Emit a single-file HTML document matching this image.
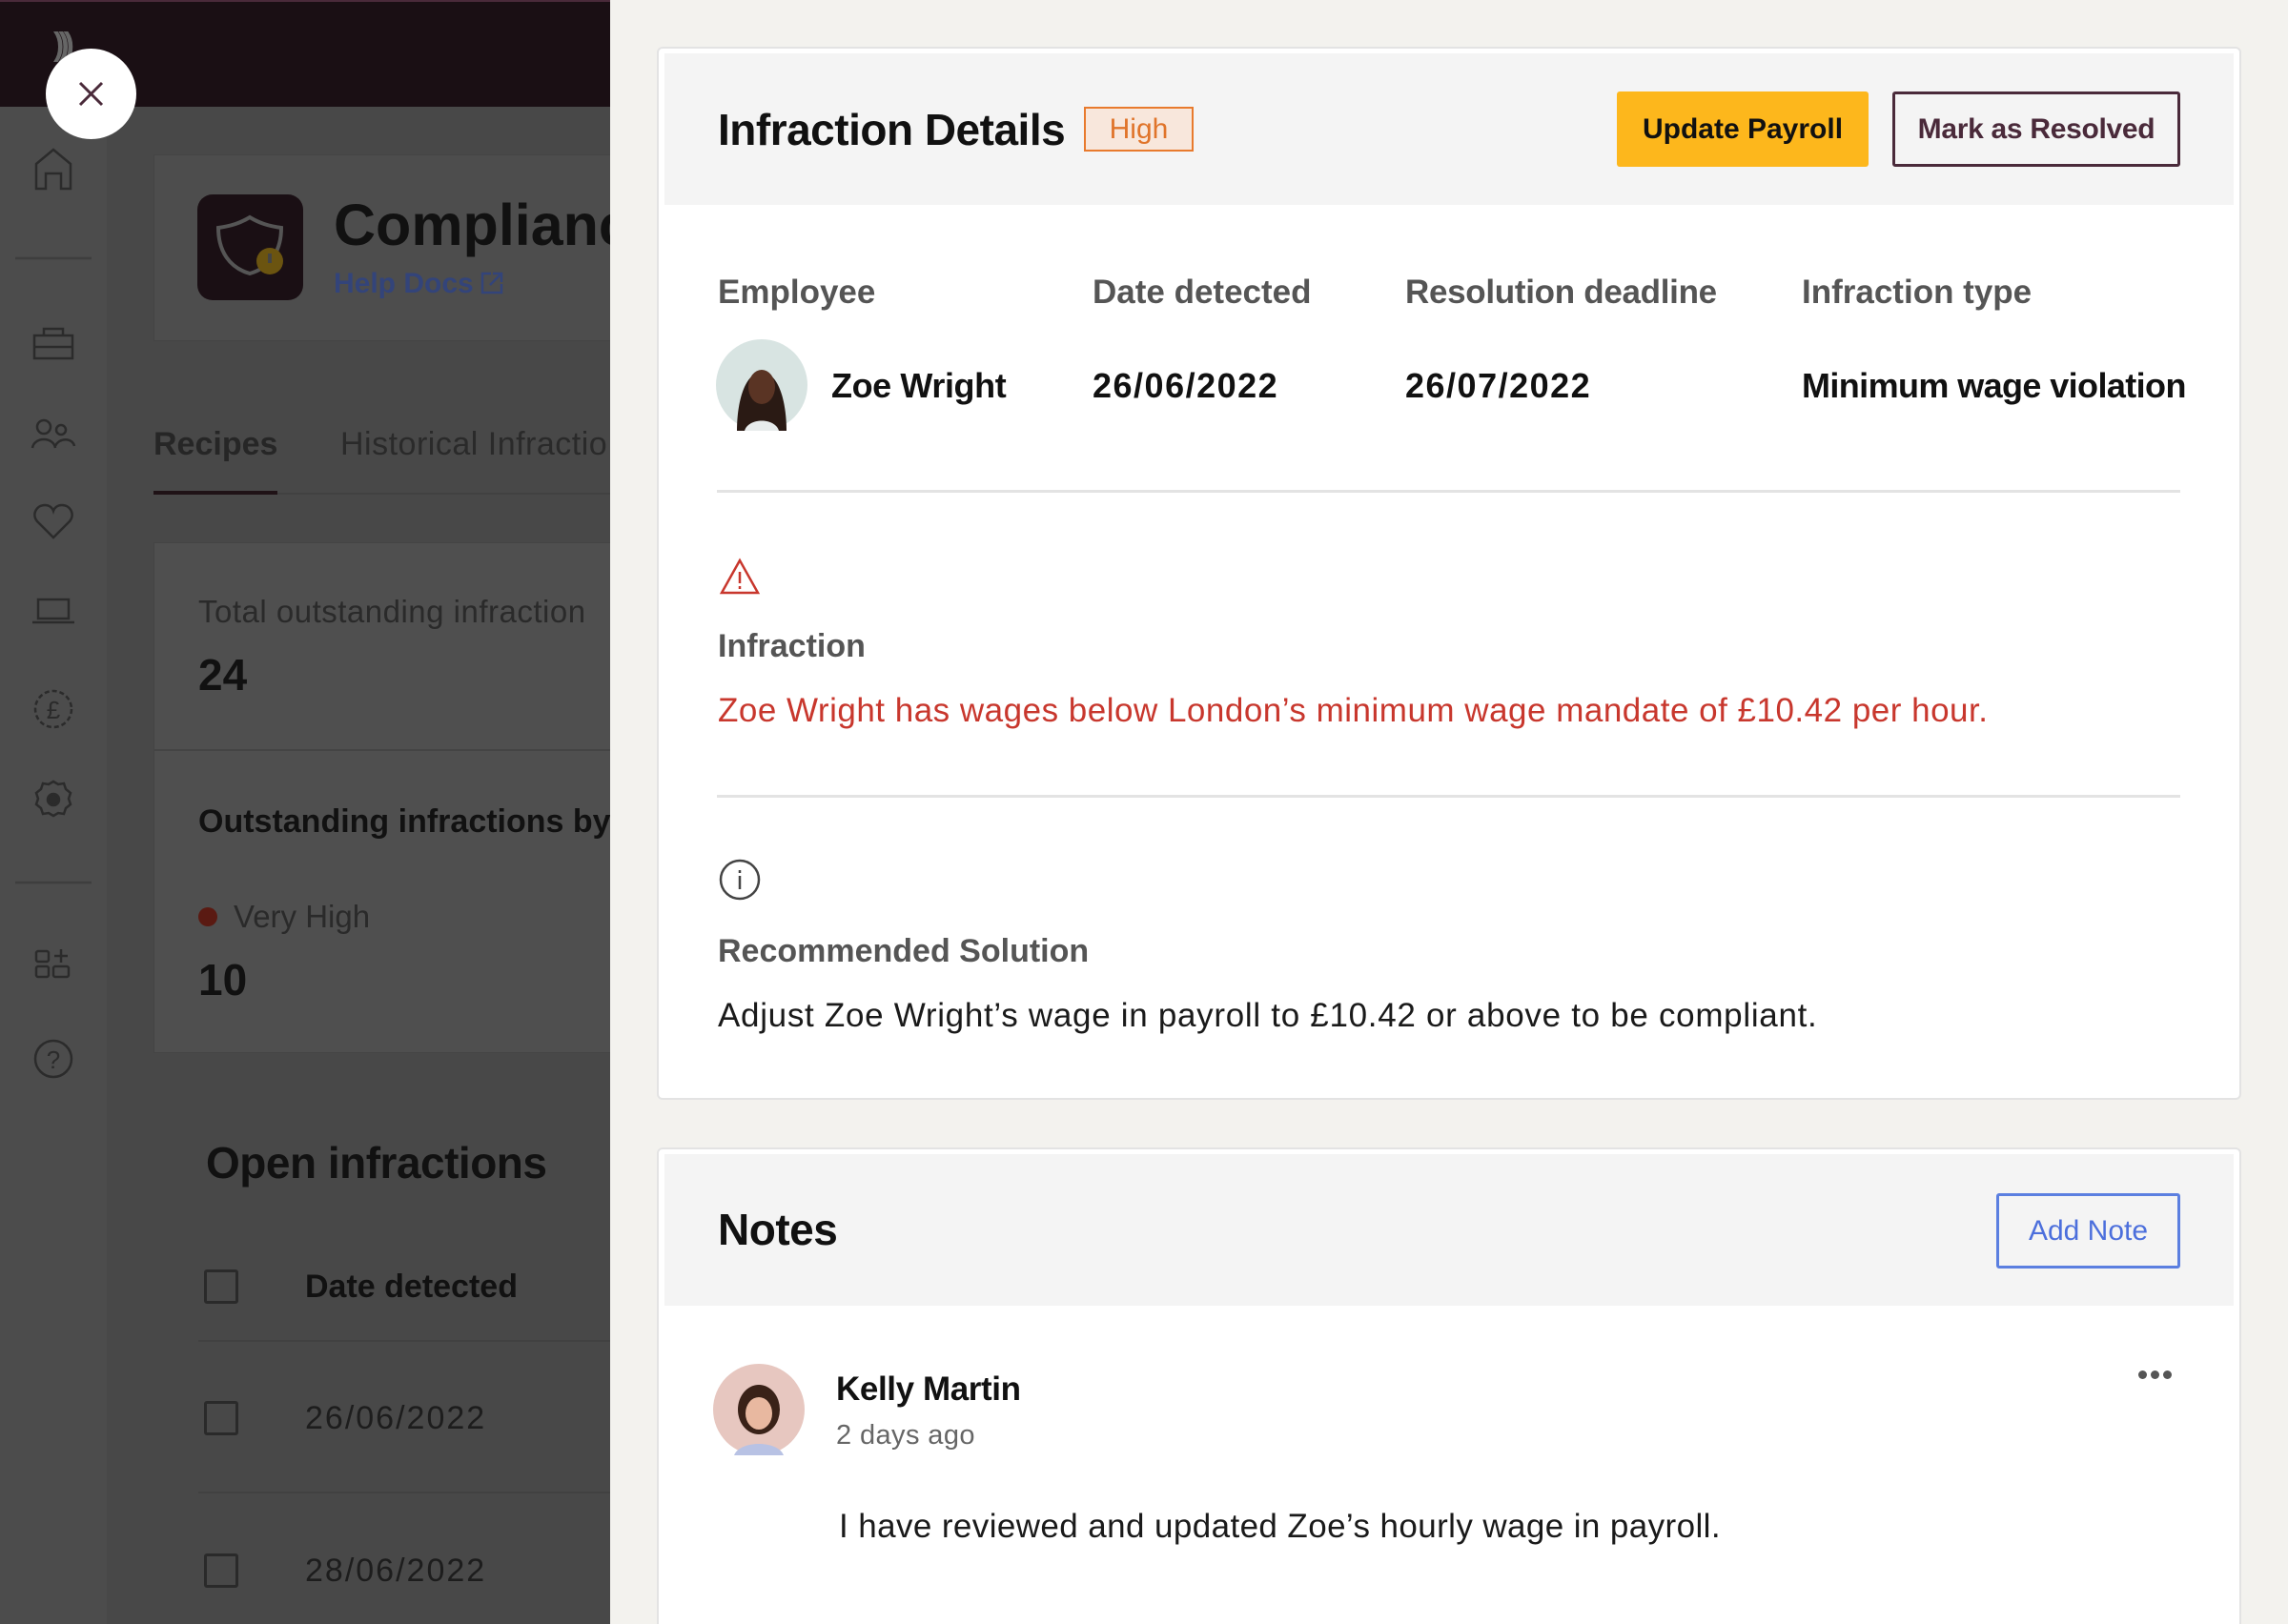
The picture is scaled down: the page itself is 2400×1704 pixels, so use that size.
<!DOCTYPE html>
<html style="overflow:hidden"><head><meta charset="utf-8"><style>
*{margin:0;padding:0;box-sizing:border-box}
html,body{width:2400px;height:1704px;overflow:hidden}
body{position:relative;background:#f3f2ee;font-family:"Liberation Sans",sans-serif}
.a{position:absolute;white-space:nowrap}
.t{line-height:1}
</style></head><body>
<div class="a" style="left:0;top:0;width:640px;height:1704px;overflow:hidden;background:#484848">
<div class="a" style="left:0;top:0;width:640px;height:112px;background:#1a0f14"></div>
<div class="a" style="left:0;top:0;width:640px;height:2px;background:#4a2a3a"></div>
<div class="a" style="left:0;top:112px;width:112px;height:1592px;background:#4c4c4c"></div>
<div class="a t" style="left:56px;top:30px;color:#666;font-size:34px;font-weight:bold;letter-spacing:-6px">)))</div>
<svg class="a" style="left:0;top:112px" width="112" height="1592" fill="none" stroke="#2b2b2b" stroke-width="2.5">
<path d="M38 86V60l18-15 18 15v26h-10V70H48v16z"/>
<line x1="16" y1="159" x2="96" y2="159" stroke="#3e3e3e"/>
<rect x="36" y="240" width="40" height="24"/><path d="M46 240v-7h20v7M36 252h40"/>
<circle cx="46" cy="336" r="7"/><circle cx="64" cy="339" r="5"/><path d="M34 358c2-12 22-12 24 0M58 356c4-9 18-9 20 0"/>
<path d="M56 452l-17-17c-6-7-1-17 8-17 5 0 8 3 9 6 1-3 4-6 9-6 9 0 14 10 8 17z"/>
<rect x="40" y="517" width="32" height="20"/><path d="M34 541h44"/>
<circle cx="56" cy="632" r="19" stroke-dasharray="5 3"/><text x="56" y="642" font-size="26" fill="#2b2b2b" stroke="none" text-anchor="middle" font-family="Liberation Sans">£</text>
<circle cx="56" cy="727" r="6" fill="#2b2b2b"/><path d="M56 708l5 3 6-1 2 6 5 4-2 6 2 6-5 4-2 6-6-1-5 3-5-3-6 1-2-6-5-4 2-6-2-6 5-4 2-6 6 1z"/>
<line x1="16" y1="814" x2="96" y2="814" stroke="#3e3e3e"/>
<rect x="38" y="886" width="13" height="11" rx="2"/><rect x="38" y="902" width="13" height="11" rx="2"/><rect x="56" y="902" width="16" height="11" rx="2"/><path d="M64 884v14M57 891h14"/>
<circle cx="56" cy="999" r="19"/><text x="56" y="1009" font-size="26" fill="#2b2b2b" stroke="none" text-anchor="middle" font-family="Liberation Sans">?</text>
</svg>
<div class="a" style="left:161px;top:162px;width:500px;height:196px;background:#4d4d4d;border:1px solid #444"></div>
<div class="a" style="left:207px;top:204px;width:111px;height:111px;background:#1a0f14;border-radius:16px"></div>
<svg class="a" style="left:207px;top:204px" width="111" height="111"><path d="M22 35c14-2 23-5 33-11 10 6 19 9 33 11 0 25-12 42-33 48-21-6-33-23-33-48z" fill="none" stroke="#555" stroke-width="4"/><circle cx="76" cy="70" r="14" fill="#6b5410"/><rect x="74" y="62" width="4" height="10" fill="#444"/></svg>
<div class="a t" style="left:350px;top:206px;font-size:61px;font-weight:bold;color:#111">Complianc</div>
<div class="a t" style="left:350px;top:283px;font-size:30px;font-weight:bold;color:#33447a">Help Docs</div>
<svg class="a" style="left:503px;top:284px" width="26" height="26" fill="none" stroke="#33447a" stroke-width="2.5"><path d="M12 3H3v20h20v-9M14 3h9v9M23 3L11 15"/></svg>
<div class="a t" style="left:161px;top:449px;font-size:34px;font-weight:bold;color:#262626">Recipes</div>
<div class="a t" style="left:357px;top:449px;font-size:34px;color:#2a2a2a;letter-spacing:0.5px">Historical Infractio</div>
<div class="a" style="left:161px;top:517px;width:479px;height:2px;background:#414141"></div>
<div class="a" style="left:161px;top:515px;width:130px;height:4px;background:#1f1216"></div>
<div class="a" style="left:161px;top:569px;width:500px;height:536px;background:#4f4f4f;border:1px solid #444"></div>
<div class="a" style="left:161px;top:786px;width:479px;height:2px;background:#444"></div>
<div class="a t" style="left:208px;top:625px;font-size:33px;color:#2a2a2a;letter-spacing:0.5px">Total outstanding infraction</div>
<div class="a t" style="left:208px;top:685px;font-size:46px;font-weight:bold;color:#111">24</div>
<div class="a t" style="left:208px;top:845px;font-size:34px;font-weight:bold;color:#111">Outstanding infractions by</div>
<div class="a" style="left:208px;top:952px;width:20px;height:20px;border-radius:50%;background:#5a1a12"></div>
<div class="a t" style="left:245px;top:945px;font-size:33px;color:#2a2a2a">Very High</div>
<div class="a t" style="left:208px;top:1005px;font-size:46px;font-weight:bold;color:#111">10</div>
<div class="a t" style="left:216px;top:1197px;font-size:46px;font-weight:bold;color:#111;letter-spacing:-0.5px">Open infractions</div>
<div class="a" style="left:214px;top:1332px;width:36px;height:36px;border:3px solid #2a2a2a;border-radius:3px"></div>
<div class="a t" style="left:320px;top:1333px;font-size:34px;font-weight:bold;color:#111">Date detected</div>
<div class="a" style="left:208px;top:1406px;width:432px;height:2px;background:#414141"></div>
<div class="a" style="left:214px;top:1470px;width:36px;height:36px;border:3px solid #2a2a2a;border-radius:3px"></div>
<div class="a t" style="left:320px;top:1471px;font-size:34px;color:#1d1d1d;letter-spacing:2px">26/06/2022</div>
<div class="a" style="left:208px;top:1565px;width:432px;height:2px;background:#414141"></div>
<div class="a" style="left:214px;top:1630px;width:36px;height:36px;border:3px solid #2a2a2a;border-radius:3px"></div>
<div class="a t" style="left:320px;top:1631px;font-size:34px;color:#1d1d1d;letter-spacing:2px">28/06/2022</div>
</div>
<div class="a" style="left:48px;top:51px;width:95px;height:95px;border-radius:50%;background:#fff"></div>
<svg class="a" style="left:48px;top:51px" width="95" height="95"><path d="M36 36l23 23M59 36L36 59" stroke="#4a2a3a" stroke-width="3"/></svg>

<div class="a" style="left:689px;top:49px;width:1662px;height:1105px;background:#fff;border:2px solid #e3e3e3;border-radius:6px"></div>
<div class="a" style="left:697px;top:56px;width:1646px;height:159px;background:#f4f4f4"></div>
<div class="a t" style="left:753px;top:113px;font-size:46px;font-weight:bold;color:#111;letter-spacing:-0.5px">Infraction Details</div>
<div class="a t" style="left:1137px;top:112px;width:115px;height:47px;border:2px solid #e87a2d;background:#f8e7dc;color:#e0742a;font-size:30px;text-align:center;line-height:43px">High</div>
<div class="a" style="left:1696px;top:96px;width:264px;height:79px;background:#fdb71c;border-radius:3px;font-size:30px;font-weight:bold;color:#111;text-align:center;line-height:79px">Update Payroll</div>
<div class="a" style="left:1985px;top:96px;width:302px;height:79px;border:3px solid #4a2a3a;border-radius:3px;font-size:30px;font-weight:bold;color:#4a2a3a;text-align:center;line-height:73px;letter-spacing:-0.3px">Mark as Resolved</div>
<div class="a t" style="left:753px;top:289px;font-size:35px;font-weight:bold;color:#555">Employee</div>
<div class="a t" style="left:1146px;top:289px;font-size:35px;font-weight:bold;color:#555">Date detected</div>
<div class="a t" style="left:1474px;top:289px;font-size:35px;font-weight:bold;color:#555;letter-spacing:-0.3px">Resolution deadline</div>
<div class="a t" style="left:1890px;top:289px;font-size:35px;font-weight:bold;color:#555">Infraction type</div>
<svg class="a" style="left:751px;top:356px" width="96" height="96"><circle cx="48" cy="48" r="48" fill="#d8e4e2"/><path d="M22 96c0-25 6-60 26-62 20 2 26 37 26 62z" fill="#2a1a14"/><ellipse cx="48" cy="50" rx="14" ry="18" fill="#5a3424"/><path d="M30 96c4-14 32-14 36 0z" fill="#e8ecec"/></svg>
<div class="a t" style="left:872px;top:387px;font-size:36px;font-weight:bold;color:#111;letter-spacing:-0.4px">Zoe Wright</div>
<div class="a t" style="left:1146px;top:387px;font-size:36px;font-weight:bold;color:#111;letter-spacing:1.5px">26/06/2022</div>
<div class="a t" style="left:1474px;top:387px;font-size:36px;font-weight:bold;color:#111;letter-spacing:1.5px">26/07/2022</div>
<div class="a t" style="left:1890px;top:387px;font-size:36px;font-weight:bold;color:#111;letter-spacing:-0.6px">Minimum wage violation</div>
<div class="a" style="left:752px;top:514px;width:1535px;height:3px;background:#e3e3e3"></div>
<svg class="a" style="left:754px;top:585px" width="44" height="40" fill="none" stroke="#c8372d" stroke-width="2.5"><path d="M22 3L3 37h38z"/><path d="M22 15v12M22 30v3"/></svg>
<div class="a t" style="left:753px;top:661px;font-size:34px;font-weight:bold;color:#555">Infraction</div>
<div class="a t" style="left:753px;top:728px;font-size:35px;color:#c8372d;letter-spacing:0.5px">Zoe Wright has wages below London’s minimum wage mandate of £10.42 per hour.</div>
<div class="a" style="left:752px;top:834px;width:1535px;height:3px;background:#e3e3e3"></div>
<svg class="a" style="left:754px;top:901px" width="44" height="44" fill="none" stroke="#444" stroke-width="2.5"><circle cx="22" cy="22" r="20"/><path d="M22 18v14M22 12v3"/></svg>
<div class="a t" style="left:753px;top:981px;font-size:34px;font-weight:bold;color:#555">Recommended Solution</div>
<div class="a t" style="left:753px;top:1048px;font-size:35px;color:#1a1a1a;letter-spacing:0.7px">Adjust Zoe Wright’s wage in payroll to £10.42 or above to be compliant.</div>

<div class="a" style="left:689px;top:1204px;width:1662px;height:540px;background:#fff;border:2px solid #e3e3e3;border-radius:6px"></div>
<div class="a" style="left:697px;top:1211px;width:1646px;height:159px;background:#f4f4f4"></div>
<div class="a t" style="left:753px;top:1267px;font-size:46px;font-weight:bold;color:#111;letter-spacing:-0.5px">Notes</div>
<div class="a" style="left:2094px;top:1252px;width:193px;height:79px;border:3px solid #5b7fe0;border-radius:3px;font-size:30px;color:#4c6fdc;text-align:center;line-height:73px">Add Note</div>
<svg class="a" style="left:748px;top:1431px" width="96" height="96"><circle cx="48" cy="48" r="48" fill="#e7c7c0"/><ellipse cx="48" cy="48" rx="22" ry="26" fill="#3a2218"/><ellipse cx="48" cy="52" rx="14" ry="17" fill="#e8b8a0"/><path d="M22 96c6-16 46-16 52 0z" fill="#b8c2e4"/></svg>
<div class="a t" style="left:877px;top:1440px;font-size:35px;font-weight:bold;color:#111;letter-spacing:-0.4px">Kelly Martin</div>
<div class="a t" style="left:877px;top:1492px;font-size:29px;color:#666;letter-spacing:0.4px">2 days ago</div>
<div class="a" style="left:2243px;top:1438px;width:9px;height:9px;border-radius:50%;background:#555;box-shadow:13px 0 #555,26px 0 #555"></div>
<div class="a t" style="left:880px;top:1584px;font-size:35px;color:#1a1a1a;letter-spacing:0.4px">I have reviewed and updated Zoe’s hourly wage in payroll.</div>
</body></html>
